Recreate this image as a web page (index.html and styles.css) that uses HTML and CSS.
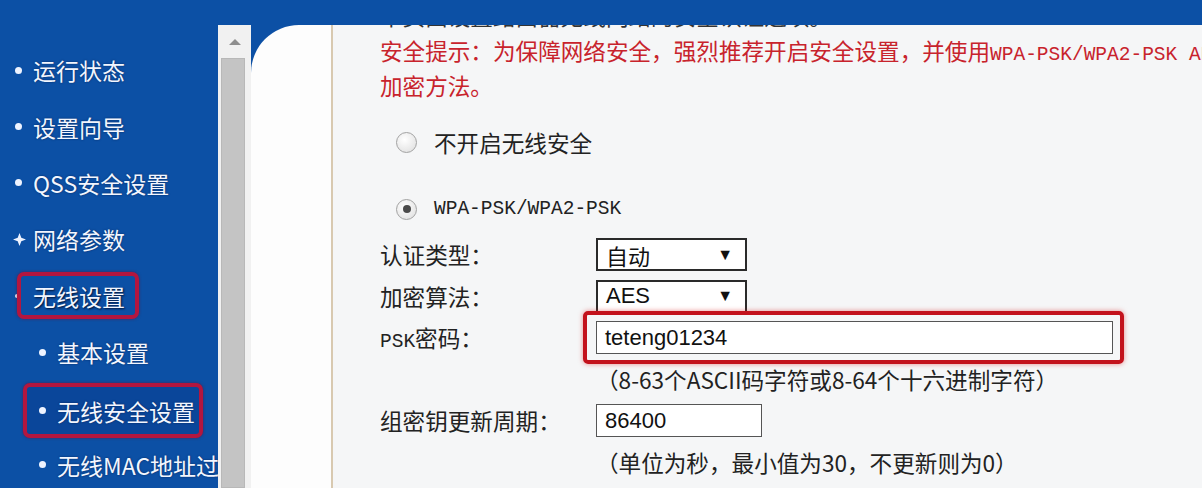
FILE: index.html
```html
<!DOCTYPE html>
<html lang="zh-CN">
<head>
    <meta charset="UTF-8">
    <title>无线安全设置</title>
    <link rel="stylesheet" href="styles.css">
</head>
<body>
    <div class="topbar"></div>
    <div class="main">
        <nav class="sidebar">
            <div class="nav-item"><span class="dot"></span>运行状态</div>
            <div class="nav-item"><span class="dot"></span>设置向导</div>
            <div class="nav-item"><span class="dot"></span>QSS安全设置</div>
            <div class="nav-item">
                <span class="dot plus"><svg width="13" height="13" viewBox="0 0 13 13"><path d="M6.5 0 L8.3 4.7 L13 6.5 L8.3 8.3 L6.5 13 L4.7 8.3 L0 6.5 L4.7 4.7 Z" fill="#eef3ff"/></svg></span>网络参数
            </div>
            <div class="nav-item open">
                <span class="dot small"></span><span class="mark">无线设置</span>
            </div>
            <div class="nav-item sub"><span class="dot"></span>基本设置</div>
            <div class="nav-item sub active">
                <span class="mark"><span class="dot"></span>无线安全设置</span>
            </div>
            <div class="nav-item sub"><span class="dot"></span>无线MAC地址过滤</div>
        </nav>

        <div class="scrollbar">
            <div class="arrow"></div>
            <div class="thumb"></div>
        </div>

        <div class="frame">
            <div class="panel">
                <div class="gutter"></div>
                <div class="content">
                    <p class="intro">本页面设置路由器无线网络的安全认证选项。</p>
                    <p class="notice">安全提示：为保障网络安全，强烈推荐开启安全设置，并使用<span class="mono">WPA-PSK/WPA2-PSK AES</span><br>加密方法。</p>

                    <div class="radio-row"><span class="radio"></span>不开启无线安全</div>
                    <div class="radio-row"><span class="radio checked"></span><span class="mono">WPA-PSK/WPA2-PSK</span></div>

                    <div class="form">
                        <label>认证类型：</label>
                        <div class="select">自动<span class="caret">▼</span></div>

                        <label>加密算法：</label>
                        <div class="select">AES<span class="caret">▼</span></div>

                        <label><span class="mono">PSK</span>密码：</label>
                        <div class="highlight"><div class="field wide">teteng01234</div></div>

                        <span></span>
                        <div class="hint">（8-63个ASCII码字符或8-64个十六进制字符）</div>

                        <label>组密钥更新周期：</label>
                        <div class="field short">86400</div>

                        <span></span>
                        <div class="hint">（单位为秒，最小值为30，不更新则为0）</div>
                    </div>
                </div>
            </div>
        </div>
    </div>
</body>
</html>
```

FILE: styles.css
```css
body {
    margin: 0;
    width: 1202px;
    height: 488px;
    overflow: hidden;
    background-color: #0c50a5;
    font-family: "Noto Sans CJK SC", "Liberation Sans", sans-serif;
}
.topbar {
    height: 25px;
    background-color: #0c50a5;
}
.main {
    display: flex;
    height: 463px;
}

/* left menu */
.sidebar {
    width: 218px;
    flex-shrink: 0;
    padding-top: 17px;
    overflow: hidden;
    color: #f2f6ff;
    font-size: 23px;
    text-shadow: 0 0 2px rgba(0, 20, 60, 0.7);
    white-space: nowrap;
}
.nav-item {
    display: flex;
    align-items: center;
    height: 56.4px;
    padding-left: 15px;
}
.nav-item.sub {
    padding-left: 39px;
}
.nav-item.sub.active {
    padding-left: 23px;
}
.dot {
    width: 18px;
    flex-shrink: 0;
    display: flex;
    align-items: center;
}
.dot::before {
    content: "";
    width: 7px;
    height: 7px;
    border-radius: 50%;
    background-color: #eef3ff;
}
.dot.plus::before,
.dot.small {
    display: none;
}
.dot.plus {
    margin-left: -2px;
    width: 20px;
}
.nav-item.open::before {
    content: "";
    width: 4px;
    height: 4px;
    margin-right: -2px;
    border-radius: 50%;
    background-color: #eef3ff;
}
.mark {
    display: flex;
    align-items: center;
    box-sizing: border-box;
    border: 4px solid #b3163f;
    border-radius: 7px;
    box-shadow: 0 0 3px rgba(120, 0, 30, 0.6);
}
.nav-item.open .mark {
    height: 47px;
    padding: 0 10px 0 12px;
    text-shadow: 1px 1px 2px #001030;
}
.nav-item.active .mark {
    height: 55px;
    margin-top: 4px;
    padding: 0 4px 0 12px;
    background-color: #0a469a;
}

/* scrollbar */
.scrollbar {
    width: 33px;
    flex-shrink: 0;
    background-color: #f1f1f1;
    display: flex;
    flex-direction: column;
    align-items: center;
}
.arrow {
    margin-top: 14px;
    width: 0;
    height: 0;
    border-left: 6px solid transparent;
    border-right: 6px solid transparent;
    border-bottom: 6px solid #8e8e8e;
}
.thumb {
    margin-top: 13px;
    margin-left: -4px;
    width: 24px;
    flex: 1;
    background-color: #c4c4c4;
    border: 1px solid #b8b8b8;
    box-sizing: border-box;
}

/* page frame */
.frame {
    flex: 1;
    display: flex;
}
.panel {
    flex: 1;
    display: flex;
    background-color: #fdfdfd;
    border-top-left-radius: 48px;
    overflow: hidden;
}
.gutter {
    width: 80px;
    flex-shrink: 0;
    border-right: 2px solid #d8c9b0;
}
.content {
    flex: 1;
    padding-left: 47px;
    background-color: #f5f6f7;
    overflow: hidden;
    white-space: nowrap;
    color: #222;
    font-size: 22.6px;
}
.mono {
    font-family: "Liberation Mono", monospace;
    font-size: 19.5px;
    line-height: 20px;
}
.intro {
    margin: -25px 0 0;
    line-height: 32px;
    color: #333;
}
.notice {
    margin: 1px 0 0;
    line-height: 35px;
    color: #c8232c;
}
.radio-row {
    display: flex;
    align-items: center;
    height: 40px;
    margin-top: 19px;
}
.radio-row + .radio-row {
    margin-top: 27px;
}
.radio {
    width: 19px;
    height: 19px;
    margin: 0 17px 0 16px;
    border-radius: 50%;
    border: 1px solid #a2a2a2;
    background: radial-gradient(circle at 40% 35%, #ffffff, #dcdcdc);
    display: flex;
    align-items: center;
    justify-content: center;
}
.radio.checked::after {
    content: "";
    width: 8px;
    height: 8px;
    border-radius: 50%;
    background-color: #4a4a4a;
}

/* form rows */
.form {
    display: grid;
    grid-template-columns: 216px 1fr;
    grid-auto-rows: 41.5px;
    align-items: center;
    margin-top: 5px;
}
.select,
.field {
    box-sizing: border-box;
    height: 33px;
    border: 2px solid #2a2a2a;
    background-color: #fff;
    display: flex;
    align-items: center;
    padding-left: 8px;
    font-family: "Liberation Sans", "Noto Sans CJK SC", sans-serif;
    font-size: 22px;
    color: #111;
}
.select {
    width: 151px;
    justify-content: space-between;
    padding-right: 12px;
}
.caret {
    font-size: 16px;
}
.field {
    border-color: #555;
    border-width: 1.5px;
}
.field.wide {
    width: 517px;
}
.field.short {
    width: 166px;
}
.highlight {
    justify-self: start;
    margin-left: -13px;
    padding: 6px 7px 6px 9px;
    border: 4px solid #c3121c;
    border-radius: 5px;
    box-shadow: 0 0 5px rgba(220, 30, 30, 0.5);
}
.hint {
    color: #222;
}
```
